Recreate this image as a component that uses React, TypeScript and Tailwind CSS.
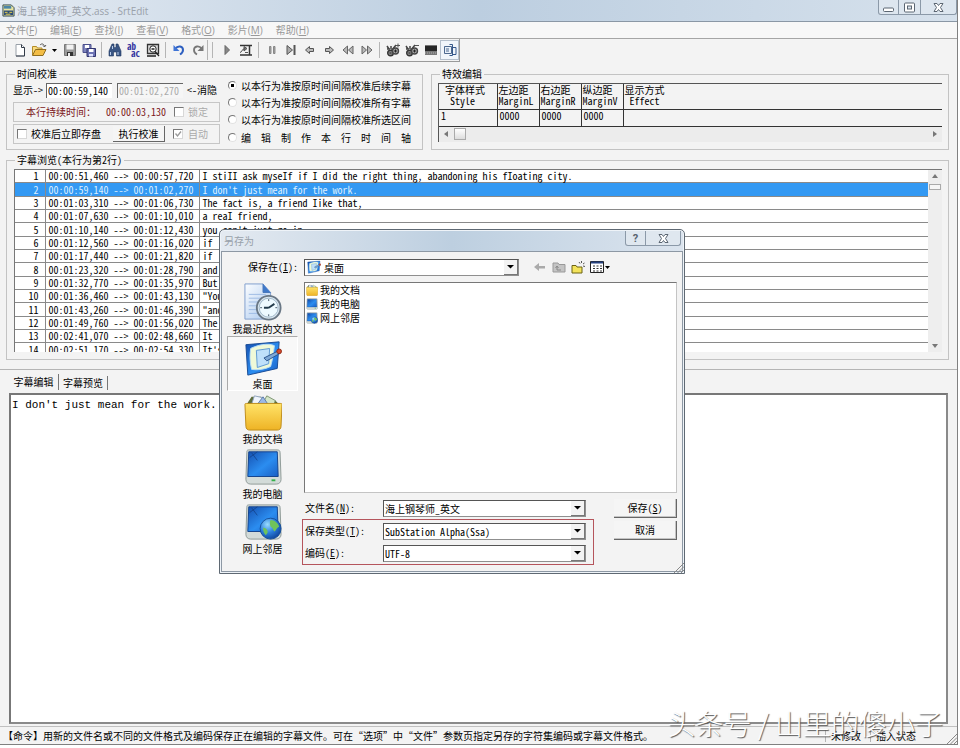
import type { ReactNode } from "react";
import { clsx } from "clsx";

const menus = [
  ["文件", "F"],
  ["编辑", "E"],
  ["查找", "I"],
  ["查看", "V"],
  ["格式", "O"],
  ["影片", "M"],
  ["帮助", "H"],
];

const lines = [
  ["00:00:51,460", "00:00:57,720", "I stiII ask myseIf if I did the right thing, abandoning his fIoating city."],
  ["00:00:59,140", "00:01:02,270", "I don't just mean for the work."],
  ["00:01:03,310", "00:01:06,730", "The fact is, a friend Iike that,"],
  ["00:01:07,630", "00:01:10,010", "a reaI friend,"],
  ["00:01:10,140", "00:01:12,430", "you can't just go in"],
  ["00:01:12,560", "00:01:16,020", "if"],
  ["00:01:17,440", "00:01:21,820", "if"],
  ["00:01:23,320", "00:01:28,790", "and"],
  ["00:01:32,770", "00:01:35,970", "But"],
  ["00:01:36,460", "00:01:43,130", "\"You"],
  ["00:01:43,260", "00:01:46,390", "\"and"],
  ["00:01:49,760", "00:01:56,020", "The"],
  ["00:02:41,070", "00:02:48,660", "It"],
  ["00:02:51,170", "00:02:54,330", "It's"],
];

const modes = [
  "以本行为准按原时间间隔校准后续字幕",
  "以本行为准按原时间间隔校准所有字幕",
  "以本行为准按原时间间隔校准所选区间",
  "编辑制作本行时间轴",
];

function Svg({ children, size = 14, box = 14 }: { children: ReactNode; size?: number; box?: number }) {
  return (
    <svg width={size} height={size} viewBox={`0 0 ${box} ${box}`} fill="none" className="shrink-0" aria-hidden>
      {children}
    </svg>
  );
}

function Rewind({ flip }: { flip?: boolean }) {
  return (
    <Svg>
      <g transform={flip ? "matrix(-1 0 0 1 14 0)" : undefined}>
        <path d="M6.500 3v8L2 7zM12 3v8L7.500 7z" fill="#b9b9b9" stroke="#666" />
      </g>
    </Svg>
  );
}

function Arrow({ flip }: { flip?: boolean }) {
  return (
    <Svg>
      <path
        d="M2.500 7l4-3.500v2h4v3h-4v2z"
        transform={flip ? "matrix(-1 0 0 1 14 0)" : undefined}
        fill="#bbb"
        stroke="#555"
      />
    </Svg>
  );
}

function Gears({ minus }: { minus?: boolean }) {
  return (
    <Svg>
      <path d="M1 3l2 3M1 6h3M3.500 10L10 2M5 3v3" stroke="#444" strokeWidth="1.500" />
      <circle cx="4.500" cy="10" r="2.800" fill="#888" stroke="#333" strokeWidth="1.400" />
      <circle cx="9.500" cy="8" r="3" fill="#aaa" stroke="#444" strokeWidth="1.400" />
      <path d="M3.500 10h2M8 8h3M9.500 6.500v3" stroke="#222" />
      <path d={minus ? "M10 2.500h4" : "M10 2.500h4M12 .5v4"} stroke="#555" />
    </Svg>
  );
}

const icons = {
  file: (
    <Svg>
      <path d="M3 1.500h5.500L11.500 4.500v8.500H3z" fill="#fff" stroke="#99a0a8" />
      <path d="M8.500 1.500v3h3v8.500H3" stroke="#333b48" />
    </Svg>
  ),
  open: (
    <Svg size={16} box={16}>
      <path d="M1.500 13V4.500h4l1 1.500H11v2" fill="#f9dc80" stroke="#b48c28" />
      <path d="M1.500 13.500l3-6H15l-3 6z" fill="#f3bd45" stroke="#8f6d1e" />
      <path d="M9 3c2-2 4-1 4.500 1.500M12 3.500l1.500 1.500L15 3" stroke="#555" />
    </Svg>
  ),
  save: (
    <Svg>
      <path d="M1.500 1.500h11v11h-11z" fill="#999" stroke="#777" />
      <path d="M3.500 1.500h7v5h-7z" fill="#f1f1f1" />
      <path d="M4 9h6v4H4z" fill="#333" />
      <path d="M5 10h2v3H5z" fill="#eee" />
    </Svg>
  ),
  saveAll: (
    <Svg>
      <path d="M1 1.500h8v8H1z" fill="#7c83bd" stroke="#4c508d" />
      <path d="M3 2h4v3H3z" fill="#fff" />
      <path d="M5 5.500h8.500v8H5z" fill="#6d73b4" stroke="#30346f" />
      <path d="M7 6h4.500v3H7z" fill="#fff" />
      <path d="M7 11h4v2.500H7z" fill="#dfe3ff" />
    </Svg>
  ),
  find: (
    <Svg>
      <path d="M4 1h2v3l1 1 1-1V1h2l3 7v5H8.500V9h-3v4H1V8z" fill="#3a5684" stroke="#233a62" strokeWidth=".6" />
      <path d="M2.500 9v3M10 9v3M4.500 3v3" stroke="#b9cdec" />
    </Svg>
  ),
  preview: (
    <Svg>
      <path d="M1.500 1.500h11v9h-11z" fill="#ddd" stroke="#333" strokeWidth="1.300" />
      <circle cx="7" cy="6" r="3.200" fill="#fff" stroke="#222" />
      <path d="M5.500 6h3M9 8.500l4 4.500M1 13h9" stroke="#222" strokeWidth="1.300" />
    </Svg>
  ),
  undo: (
    <Svg>
      <path d="M3 6c3-4 8-3 8 1 0 2-1.500 3.500-3 4.500" stroke="#2d5fc0" strokeWidth="2" />
      <path d="M1.500 2v6h6z" fill="#3f74d6" />
    </Svg>
  ),
  redo: (
    <Svg>
      <path d="M11 6C8 2 3 3 3 7c0 2 1 3.500 3 4.500" stroke="#777" strokeWidth="1.800" />
      <path d="M12.500 2v6h-6z" fill="#777" />
    </Svg>
  ),
  play: (
    <Svg>
      <path d="M5 2.500L9.500 7 5 11.500z" fill="#888" stroke="#666" />
    </Svg>
  ),
  loop: (
    <Svg>
      <path d="M1 2.500h12M1 12h12M10.500 3v9" stroke="#333" strokeWidth="1.500" />
      <path d="M1 9.500c2 0 2-4 5-4M5 3.500l3 2-3 2.500zM6 9.500h3" stroke="#555" fill="#777" />
    </Svg>
  ),
  pause: (
    <Svg>
      <path d="M4.500 3.500h1.500v7H4.500zM8.500 3.500H10v7H8.500z" fill="#aaa" stroke="#777" strokeWidth=".8" />
    </Svg>
  ),
  step: (
    <Svg>
      <path d="M3 2.500L8.500 7 3 11.500z" fill="#aaa" stroke="#555" />
      <path d="M10.500 2v10" stroke="#555" strokeWidth="2" />
    </Svg>
  ),
  film: (
    <Svg>
      <path d="M1 2h12v10H1z" fill="#777" />
      <path d="M1 3h12v5H1z" fill="#262626" />
      <path d="M1 10h12" stroke="#b0b0b0" strokeDasharray="1 1" />
    </Svg>
  ),
  panes: (
    <Svg>
      <path d="M1.500 3.500h7v7h-7z" fill="#e8f0fa" stroke="#4c688f" />
      <path d="M6.500 1.500h3v11h-3M9.500 4.500H13v7H9.500" stroke="#35588c" />
      <path d="M3 6h3M3 8h3" stroke="#4c688f" />
    </Svg>
  ),
};

function Tool({ label, children, on }: { label: string; children: ReactNode; on?: boolean }) {
  return (
    <button
      type="button"
      aria-label={label}
      className={clsx(
        "flex h-[20px] w-[19px] shrink-0 items-center justify-center",
        on && "border border-[#b4bfcc] bg-[#f0f5fb]",
      )}
    >
      {children}
    </button>
  );
}

function Sep() {
  return <span className="mx-[3px] h-4 w-px shrink-0 bg-[#b5b5b5]" />;
}

function Toolbar() {
  return (
    <div className="flex h-[23px] w-[460px] items-center border-r border-b border-[#9a9a9a] pl-[5px]">
      <span className="mr-1 h-4 w-px bg-[#b5b5b5]" />
      <Tool label="新建">{icons.file}</Tool>
      <Tool label="打开">{icons.open}</Tool>
      <button type="button" aria-label="最近文件" className="flex h-5 w-3 items-center justify-center">
        <Svg size={5} box={5}>
          <path d="M0 1h5L2.500 4z" fill="#000" />
        </Svg>
      </button>
      <Tool label="保存">{icons.save}</Tool>
      <Tool label="全部保存">{icons.saveAll}</Tool>
      <Sep />
      <Tool label="查找">{icons.find}</Tool>
      <Tool label="替换">
        <span className="text-[9px] leading-[7px] font-bold text-[#3535a0]">
          <span className="block text-left">ab</span>
          <span className="block pl-1">ac</span>
        </span>
      </Tool>
      <Tool label="预览">{icons.preview}</Tool>
      <Sep />
      <Tool label="撤销">{icons.undo}</Tool>
      <Tool label="重做">{icons.redo}</Tool>
      <span className="h-5 w-px bg-[#b5b5b5]" />
      <span className="mx-1 h-4 w-px bg-[#b5b5b5]" />
      <Tool label="播放">{icons.play}</Tool>
      <Tool label="播放本行">{icons.loop}</Tool>
      <Sep />
      <Tool label="暂停">{icons.pause}</Tool>
      <Tool label="单帧">{icons.step}</Tool>
      <Tool label="后退"><Arrow /></Tool>
      <Tool label="前进"><Arrow flip /></Tool>
      <Tool label="快退"><Rewind /></Tool>
      <Tool label="快进"><Rewind flip /></Tool>
      <Sep />
      <Tool label="加字幕"><Gears /></Tool>
      <Tool label="减字幕"><Gears minus /></Tool>
      <Tool label="影片">{icons.film}</Tool>
      <Tool label="布局" on>{icons.panes}</Tool>
    </div>
  );
}

function Group({ title, className, children }: { title: string; className?: string; children: ReactNode }) {
  return (
    <fieldset className={clsx("min-w-0 border border-[#c3c3c3] px-[6px]", className)}>
      <legend className="ml-[2px] px-[2px] leading-3">{title}</legend>
      {children}
    </fieldset>
  );
}

const check =
  "h-[10px] w-[10px] shrink-0 appearance-none border border-[#d8d8d8] border-t-[#777] border-l-[#777] bg-white";

function TimingGroup() {
  return (
    <Group title="时间校准" className="flex h-[82px] w-[417px] shrink-0">
      <div className="flex h-full w-[207px] shrink-0 flex-col">
        <div className="mt-[2px] flex h-[16px] items-center whitespace-nowrap">
          <label htmlFor="show" className="w-[33px]">显示-&gt;</label>
          <input
            id="show"
            defaultValue="00:00:59,140"
            className="h-[15px] w-[66px] border-t border-l border-[#666] bg-white pl-px outline-none"
          />
          <input
            id="hide"
            disabled
            defaultValue="00:01:02,270"
            className="ml-[5px] h-[15px] w-[66px] border-t border-l border-[#666] bg-[#f6f6f6] pl-px text-[#aaa]"
          />
          <label htmlFor="hide" className="ml-1">&lt;-消隐</label>
        </div>
        <div className="mt-1 flex h-5 items-center border border-[#c6c6c6] pl-3 whitespace-nowrap text-[#7b1620]">
          <span className="w-[80px]">本行持续时间：</span>
          <span>00:00:03,130</span>
          <label className="ml-2 flex items-center gap-1 text-[#aaa]">
            <input type="checkbox" disabled className={check} />
            锁定
          </label>
        </div>
        <div className="mt-[2px] flex h-5 items-center border border-[#c6c6c6] pl-[3px] whitespace-nowrap">
          <label className="flex items-center gap-1">
            <input type="checkbox" className={check} />
            校准后立即存盘
          </label>
          <button
            type="button"
            className="ml-[12px] h-4 w-[52px] border-r border-b border-[#666] bg-[#f5f5f5]"
          >
            执行校准
          </button>
          <label className="ml-2 flex items-center gap-[5px] text-[#aaa]">
            <span className="grid">
              <input type="checkbox" disabled defaultChecked className={clsx(check, "col-start-1 row-start-1")} />
              <svg width="10" height="10" viewBox="0 0 10 10" className="col-start-1 row-start-1" aria-hidden>
                <path d="M2.500 4.500l2 2.500 3.500-4.500" fill="none" stroke="#999" strokeWidth="1.300" />
              </svg>
            </span>
            自动
          </label>
        </div>
      </div>
      <div className="-mt-[3px] ml-2 flex flex-col">
        {modes.map((m, i) => (
          <label key={m} className={clsx("flex items-center", i === 3 ? "h-[19px]" : "h-[17px]")}>
            <input
              type="radio"
              name="mode"
              defaultChecked={i === 0}
              className="mr-1 h-[9px] w-[9px] appearance-none rounded-full border border-[#e2e2e2] border-t-[#777] border-l-[#777] bg-white checked:bg-[radial-gradient(circle,#000_30%,#fff_40%)]"
            />
            <span className="flex w-[170px] justify-between">
              {i === 3 ? [...m].map((c, n) => <span key={n}>{c}</span>) : m}
            </span>
          </label>
        ))}
      </div>
    </Group>
  );
}

function EffectGroup() {
  const cell = "border-r border-[#333] p-0 text-left align-top font-normal whitespace-pre leading-[11px]";
  const cols = ["左边距\nMarginL", "右边距\nMarginR", "纵边距\nMarginV"];
  return (
    <Group title="特效编辑" className="h-[82px] flex-1">
      <div className="mt-[3px] border-t border-l border-[#555]">
        <table className="w-full table-fixed border-collapse">
          <thead>
            <tr className="h-[25px] border-b border-[#333]">
              <th className={clsx(cell, "w-[58px] pl-[6px]")}>{"字体样式\n Style"}</th>
              {cols.map((c) => (
                <th key={c} className={clsx(cell, "w-[42px] pl-px")}>{c}</th>
              ))}
              <th className="p-0 pl-px text-left align-top leading-[11px] font-normal whitespace-pre">{"显示方式\n Effect"}</th>
            </tr>
          </thead>
          <tbody>
            <tr className="h-[17px] border-b border-[#333]">
              <td className={clsx(cell, "pl-[2px]")}>1</td>
              <td className={clsx(cell, "pl-[2px]")}>0000</td>
              <td className={clsx(cell, "pl-[2px]")}>0000</td>
              <td className={clsx(cell, "pl-[2px]")}>0000</td>
              <td />
            </tr>
          </tbody>
        </table>
        <div className="flex h-[15px] items-center bg-[#ececec] px-[5px]">
          <svg width="4" height="6" viewBox="0 0 4 6" aria-hidden><path d="M4 0v6L0 3z" fill="#777" /></svg>
          <span className="ml-[6px] h-3 w-3 border border-[#aaa] bg-linear-to-b from-white to-[#ddd]" />
          <svg width="4" height="6" viewBox="0 0 4 6" className="ml-auto" aria-hidden><path d="M0 0v6l4-3z" fill="#777" /></svg>
        </div>
      </div>
    </Group>
  );
}

function SubtitleList() {
  return (
    <Group title="字幕浏览(本行为第2行)" className="mx-[6px] mt-1 mr-2 h-[206px]">
      <div className="mt-[3px] ml-px flex h-[183px] overflow-hidden border-t border-l border-[#777] bg-white">
        <table className="h-[187px] flex-1 border-collapse">
          <tbody>
            {lines.map(([from, to, text], i) => (
              <tr
                key={from}
                className={clsx("border-b border-[#8a8a8a] leading-3", i === 1 && "bg-[#3399f3] text-[#dcefff]")}
              >
                <td className="w-[30px] border-r border-[#8a8a8a] p-0 pr-[6px] text-right">{i + 1}</td>
                <td className="w-[154px] border-r border-[#8a8a8a] p-0 pl-[3px] whitespace-nowrap">
                  {from} --&gt; {to}
                </td>
                <td className="p-0 pl-[3px] whitespace-nowrap">{text}</td>
              </tr>
            ))}
          </tbody>
        </table>
        <div className="flex w-[14px] shrink-0 flex-col items-center bg-[#eee] py-1">
          <svg width="6" height="4" viewBox="0 0 6 4" aria-hidden><path d="M0 4h6L3 0z" fill="#777" /></svg>
          <span className="mt-[6px] h-[6px] w-3 border border-[#aaa] bg-[#f6f6f6]" />
          <svg width="6" height="4" viewBox="0 0 6 4" className="mt-auto" aria-hidden><path d="M0 0h6L3 4z" fill="#777" /></svg>
        </div>
      </div>
    </Group>
  );
}

// the five shell icons share one 40-unit box
function PlaceIcon({ kind, size = 40 }: { kind: string; size?: number }) {
  return (
    <svg width={size} height={size} viewBox="0 0 40 40" fill="none" className="shrink-0" aria-hidden>
      <defs>
        <linearGradient id="screen" x1="0" y1="0" x2="1" y2="1">
          <stop offset="0" stopColor="#1550b0" />
          <stop offset=".55" stopColor="#2b8df0" />
          <stop offset="1" stopColor="#1a5fc4" />
        </linearGradient>
        <linearGradient id="folder" x1="0" y1="0" x2="0" y2="1">
          <stop offset="0" stopColor="#ffe368" />
          <stop offset="1" stopColor="#eeb325" />
        </linearGradient>
        <radialGradient id="globe" cx=".35" cy=".3" r=".8">
          <stop offset="0" stopColor="#9adcff" />
          <stop offset=".5" stopColor="#2b7fdc" />
          <stop offset="1" stopColor="#0c3c92" />
        </radialGradient>
        <linearGradient id="sheet" x1="0" y1="0" x2="1" y2="1">
          <stop offset="0" stopColor="#fbfdff" />
          <stop offset="1" stopColor="#a9c7ee" />
        </linearGradient>
      </defs>
      {kind === "recent" && (
        <>
          <path d="M1 1h19l8 9v28H1z" fill="url(#sheet)" stroke="#7d9ccc" />
          <path d="M20 1v9h8" fill="#3e78c9" stroke="#4776ba" />
          <path d="M5 12h18M5 16h16M5 20h10M5 24h8M5 28h8M5 32h10" stroke="#9dbbe4" />
          <circle cx="26" cy="26" r="12.500" fill="#d9e6ef" stroke="#697785" strokeWidth="2" />
          <circle cx="26" cy="26" r="10" fill="#eefaff" stroke="#9fb6c8" />
          <path d="M26 26l6-4M26 26h-5" stroke="#233b4b" strokeWidth="2" />
          <path d="M26 17v2M26 33v2M17 26h2M33 26h2" stroke="#456" />
        </>
      )}
      {kind === "desktop" && (
        <>
          <path d="M2 6l35-3-2 28-31 7z" fill="url(#screen)" stroke="#174a94" />
          <path d="M7 10c8-4 18-6 25-3-1 8-2 15-4 22-6 3-14 4-20 3-2-8-2-15-1-22z" fill="#eff9d8" stroke="#b8dcf5" />
          <path d="M13 12l14-2-1 16-12 4z" fill="#bfe0fa" stroke="#5d98d2" />
          <path d="M21 20l14-7 3 2-14 8z" fill="#7fa9d6" stroke="#2a538c" />
          <circle cx="37" cy="13" r="2.500" fill="#d54a2b" stroke="#8c2a16" />
        </>
      )}
      {kind === "docs" && (
        <>
          <path d="M4 10l4-6h10l3 4h12l4 4v5H4z" fill="#5e6d3c" />
          <path d="M8 12l3-9 9 2-2 9z" fill="#eff4fb" stroke="#8fa3bd" />
          <path d="M19 12l5-9 9 5-3 7z" fill="#d4e6c7" stroke="#7d9473" />
          <path d="M14 12l6-8 6 9z" fill="#9bb9e5" stroke="#5f7ca8" />
          <path d="M1 12c0-1 1-1 2-1h35c1 0 2 0 2 1l-1 23c0 3-2 4-4 4H6c-2 0-4-1-4-4z" fill="url(#folder)" stroke="#bd8a17" />
        </>
      )}
      {(kind === "computer" || kind === "network") && (
        <>
          <path d="M5 2h30c2 0 3 1 3 3l1 28c0 3-2 5-5 5H7c-3 0-5-2-5-5L3 5c0-2 0-3 2-3z" fill="#d3dbd9" stroke="#8c9895" />
          <path d="M5 4h30l1 26H4z" fill="url(#screen)" stroke="#12408a" />
          <path d="M6 10l8-6M8 5l6 8" stroke="#123f86" strokeWidth=".8" />
          <path d="M29 34h4" stroke="#35b04b" strokeWidth="2" />
        </>
      )}
      {kind === "network" && (
        <>
          <circle cx="28" cy="27" r="11" fill="url(#globe)" stroke="#164f99" />
          <path d="M28 18c4 0 8 3 9 7-3 1-3 4-5 5-2-2-1-4-4-5-1-3-1-5 0-7zM20 26c3 0 5 2 5 5l-2 3c-2-2-3-5-3-8z" fill="#6fc35a" />
        </>
      )}
    </svg>
  );
}

const places = [
  ["recent", "我最近的文档"],
  ["desktop", "桌面"],
  ["docs", "我的文档"],
  ["computer", "我的电脑"],
  ["network", "网上邻居"],
];

function Combo({ id, value, icon, className }: { id: string; value: string; icon?: ReactNode; className?: string }) {
  return (
    <div className={clsx("flex h-[17px] items-center border border-[#8f8f8f] border-t-[#555] border-l-[#555] bg-white", className)}>
      {icon}
      <select id={id} className="h-[15px] min-w-0 flex-1 appearance-none bg-transparent pl-px leading-[15px] outline-none">
        <option>{value}</option>
      </select>
      <span className="pointer-events-none flex h-[15px] w-[14px] items-center justify-center border-r border-b border-[#777] bg-[#f3f3f3]">
        <Svg size={7} box={7}>
          <path d="M0 2h7L3.500 5.500z" fill="#000" />
        </Svg>
      </span>
    </div>
  );
}

function Field({ id, label, hot, value }: { id: string; label: string; hot: string; value: string }) {
  return (
    <div className="flex h-[22px] items-center">
      <label htmlFor={id} className="w-[78px] whitespace-nowrap">
        {label}(<u>{hot}</u>):
      </label>
      <Combo id={id} value={value} className="w-[203px]" />
    </div>
  );
}

function SaveDialog() {
  const button = "h-[19px] w-[63px] border-r border-b border-[#666] bg-[#f5f5f5] shadow-[inset_-1px_-1px_#c4c4c4]";
  return (
    <div
      role="dialog"
      aria-label="另存为"
      className="absolute top-[229px] left-[219px] flex h-[345px] w-[466px] flex-col rounded-t-[5px] border border-[#5f6973] bg-[#eef3f8] p-px"
    >
      <div className="flex h-[20px] shrink-0 items-center rounded-t-[3px] bg-linear-to-r from-[#e4eaf1] via-[#bdcfe0] to-[#dbe4ee] pl-[3px] text-[#98a0a9]">
        <span>另存为</span>
        <div className="mr-[2px] ml-auto flex h-[15px] self-start rounded-b-[3px] border border-t-0 border-[#8b99a8] bg-[#dfe7ef] text-[#58636f]">
          <button type="button" aria-label="帮助" className="w-[20px] border-r border-[#8b99a8] font-[Roboto] text-[11px] leading-[13px] font-bold">?</button>
          <button type="button" aria-label="关闭" className="flex w-[34px] items-center justify-center"><CloseMark /></button>
        </div>
      </div>
      <div className="flex min-h-0 flex-1 border border-[#8d98a4] bg-[#f3f3f3]">
        <div className="flex w-[77px] shrink-0 flex-col pt-[29px] pl-[5px]">
          {places.map(([kind, name]) => (
            <button
              key={kind}
              type="button"
              className={clsx(
                "flex h-[55px] w-[71px] flex-col items-center whitespace-nowrap",
                kind === "desktop" && "border border-white border-t-[#aaa] border-l-[#aaa] bg-[#f8f8f8]",
              )}
            >
              <span className="flex h-[42px] items-center"><PlaceIcon kind={kind} size={38} /></span>
              <span className="leading-3">{name}</span>
            </button>
          ))}
        </div>
        <div className="flex min-w-0 flex-1 flex-col pr-[5px] pl-[5px]">
          <div className="-ml-[56px] flex h-[30px] shrink-0 items-center">
            <label htmlFor="folder" className="w-[56px] whitespace-nowrap">保存在(<u>I</u>):</label>
            <Combo
              id="folder"
              value="桌面"
              className="w-[215px] [&>svg]:mx-[2px]"
              icon={<PlaceIcon kind="desktop" size={14} />}
            />
            <div className="ml-[14px] flex items-center gap-[5px]">
              <button type="button" aria-label="后退">
                <Svg><path d="M1 7l5-4v3h6v2.500H6V11z" fill="#aaa" /></Svg>
              </button>
              <button type="button" aria-label="向上">
                <Svg>
                  <path d="M1 3h5l1 1.500h6V12H1z" fill="#c4c4c4" stroke="#999" />
                  <path d="M5 6.500v3.500h4M3.500 8L5 6l1.500 2" stroke="#888" />
                </Svg>
              </button>
              <button type="button" aria-label="新建文件夹">
                <Svg>
                  <path d="M1 5.500h4l1 1.500h5v6H1z" fill="#f3e35b" stroke="#6b6215" />
                  <path d="M10.500 1v2M8 2l1 1.500M13.500 3L12 4M12 6l2 .5" stroke="#555" />
                </Svg>
              </button>
              <button type="button" aria-label="视图" className="flex items-center gap-px">
                <Svg>
                  <path d="M.5 1.500h13v11H.5z" fill="#fff" stroke="#222" />
                  <path d="M1 2.500h12" stroke="#24407e" strokeWidth="2" />
                  <path d="M3 6h9M3 8.500h9M3 11h9" stroke="#333" strokeDasharray="2 1.500" />
                </Svg>
                <Svg size={5} box={5}><path d="M0 1h5L2.500 4z" fill="#000" /></Svg>
              </button>
            </div>
          </div>
          <ul className="h-[211px] shrink-0 border border-[#c4c4c4] border-t-[#777] border-l-[#777] bg-white pl-px">
            {["docs", "computer", "network"].map((kind) => (
              <li key={kind} className="flex h-[14px] items-center gap-[2px]">
                <PlaceIcon kind={kind} size={12} />
                {places.find((p) => p[0] === kind)![1]}
              </li>
            ))}
          </ul>
          <div className="mt-1 flex justify-between">
            <div className="-ml-[2px] w-[292px]">
              <div className="pl-[3px]">
                <Field id="name" label="文件名" hot="N" value="海上钢琴师_英文" />
              </div>
              <div className="border border-[#b5555c] pl-[2px]">
                <Field id="type" label="保存类型" hot="T" value="SubStation Alpha(Ssa)" />
                <Field id="enc" label="编码" hot="E" value="UTF-8" />
              </div>
            </div>
            <div className="flex flex-col gap-[3px] pt-[2px]">
              <button type="button" className={button}>保存(<u>S</u>)</button>
              <button type="button" className={button}>取消</button>
            </div>
          </div>
        </div>
      </div>
      <Grip />
    </div>
  );
}

function CloseMark() {
  return (
    <Svg size={11} box={11}>
      <path d="M1 1.500h3l1.500 2 1.500-2h3L7.500 5.500 10 9.500H7l-1.500-2-1.500 2H1l2.500-4z" fill="#fff" stroke="#5b6672" />
    </Svg>
  );
}

function Grip() {
  return (
    <svg width="10" height="10" viewBox="0 0 10 10" className="absolute right-0 bottom-0" aria-hidden>
      <path d="M0 10L10 0M3.500 10L10 3.500M7 10l3-3" stroke="#888" />
    </svg>
  );
}

function TitleBar() {
  const box = "flex items-center justify-center border-r border-[#8b99a8]";
  return (
    <header className="flex h-[22px] shrink-0 items-center border-b border-[#8a97a5] bg-linear-to-r from-[#e3eaf2] via-[#bccee0] to-[#d6e1ec] pl-[2px] text-[#9aa1aa]">
      <Svg size={13}>
        <path d="M1 1h9l3 3v9H1z" fill="#e9e4a0" stroke="#30454f" />
        <path d="M2 2h8v3H2z" fill="#4a86a8" />
        <path d="M2 7h10v5H2z" fill="#2b4c7a" />
        <path d="M3 9h3M8 9h3M4 11h5" stroke="#f1d94a" />
      </Svg>
      <h1 className="ml-[2px] font-['Open_Sans','Noto_Sans_CJK_SC',sans-serif] text-[10px]">海上钢琴师_英文.ass - SrtEdit</h1>
      <div className="ml-auto flex h-[15px] self-start rounded-b-[3px] border border-t-0 border-[#8b99a8] bg-[#dde6ef]">
        <button type="button" aria-label="最小化" className={clsx(box, "w-[20px]")}>
          <Svg size={11} box={11}><rect x=".5" y="6" width="10" height="3.500" rx="1" fill="#fff" stroke="#5b6672" /></Svg>
        </button>
        <button type="button" aria-label="还原" className={clsx(box, "w-[22px]")}>
          <Svg size={11} box={11}>
            <rect x=".5" y="1" width="10" height="9" rx="1" fill="#fff" stroke="#5b6672" />
            <rect x="3.500" y="4" width="4" height="3" fill="#dde6ef" stroke="#5b6672" />
          </Svg>
        </button>
        <button type="button" aria-label="关闭" className="flex w-[35px] items-center justify-center"><CloseMark /></button>
      </div>
    </header>
  );
}

export default function App() {
  return (
    <div className="relative flex min-h-screen flex-col bg-white pr-[2px] pb-[3px] font-['Noto_Sans_Mono_CJK_SC','Liberation_Mono','Noto_Sans_CJK_SC',monospace] text-[10px] leading-3 text-black">
      <div className="relative flex flex-1 flex-col border-r border-b border-[#808080] bg-[#f3f3f3]">
        <TitleBar />
        <nav className="flex h-[17px] shrink-0 items-center gap-[13px] border-b border-[#a5a5a5] bg-[#f7f7f7] pl-[6px] font-['Open_Sans','Noto_Sans_CJK_SC',sans-serif] text-[#999]">
          {menus.map(([name, key]) => (
            <button key={key} type="button" className="whitespace-nowrap">
              {name}(<u>{key}</u>)
            </button>
          ))}
        </nav>
        <Toolbar />

        <div className="mt-[6px] flex gap-2 pr-2 pl-[6px]">
          <TimingGroup />
          <EffectGroup />
        </div>
        <SubtitleList />

        <div className="mt-[9px] flex flex-1 flex-col border-t border-[#b5b5b5] px-[9px]">
          <div role="tablist" className="flex h-[23px] items-center">
            <button type="button" role="tab" aria-selected className="h-4 w-[50px] border-r border-[#777]">字幕编辑</button>
            <button type="button" role="tab" aria-selected={false} className="mt-[2px] h-[14px] w-[49px] border-r border-[#777]">字幕预览</button>
          </div>
          <textarea
            aria-label="字幕编辑"
            defaultValue="I don't just mean for the work."
            className="w-full flex-1 resize-none border-2 border-[#8a8a8a] border-t-[#777] border-l-[#777] bg-white px-px pt-[3px] font-['Liberation_Mono',monospace] text-[11px] leading-[15px] outline-none"
          />
        </div>

        <footer className="mt-[2px] flex h-[18px] shrink-0 items-center border-t border-[#c0c0c0] pl-[3px] whitespace-nowrap">
          <span>【命令】用新的文件名或不同的文件格式及编码保存正在编辑的字幕文件。可在“选项”中“文件”参数页指定另存的字符集编码或字幕文件格式。</span>
          <span className="ml-auto w-[45px] border-l border-[#b5b5b5] pl-[5px]">未修改</span>
          <span className="w-[87px] border-l border-[#b5b5b5] pl-[5px]">插入状态</span>
        </footer>
        <Grip />
      </div>

      <SaveDialog />

      <p className="pointer-events-none absolute right-[17px] bottom-[8px] font-['Noto_Sans_CJK_SC',sans-serif] text-[28px] leading-[34px] font-light whitespace-nowrap text-white [text-shadow:1px_1px_1px_#555]">
        头条号 / 山里的傻小子
      </p>
    </div>
  );
}
